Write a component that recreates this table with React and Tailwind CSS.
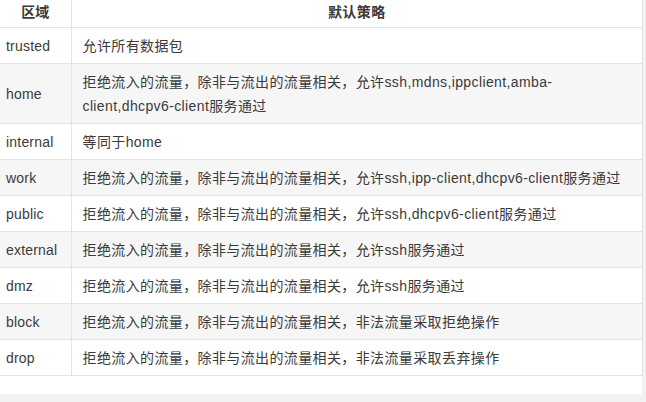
import React from 'react';

const rows = [
    { zone: 'trusted', policy: '允许所有数据包' },
    { zone: 'home', policy: ['拒绝流入的流量，除非与流出的流量相关，允许ssh,mdns,ippclient,amba-', 'client,dhcpv6-client服务通过'] },
    { zone: 'internal', policy: '等同于home' },
    { zone: 'work', policy: '拒绝流入的流量，除非与流出的流量相关，允许ssh,ipp-client,dhcpv6-client服务通过' },
    { zone: 'public', policy: '拒绝流入的流量，除非与流出的流量相关，允许ssh,dhcpv6-client服务通过' },
    { zone: 'external', policy: '拒绝流入的流量，除非与流出的流量相关，允许ssh服务通过' },
    { zone: 'dmz', policy: '拒绝流入的流量，除非与流出的流量相关，允许ssh服务通过' },
    { zone: 'block', policy: '拒绝流入的流量，除非与流出的流量相关，非法流量采取拒绝操作' },
    { zone: 'drop', policy: '拒绝流入的流量，除非与流出的流量相关，非法流量采取丢弃操作' },
];

const App = () => {
    return (
        <div className="w-[646px] h-[402px] bg-[#f2f2f0] overflow-hidden font-['Liberation_Sans','Noto_Sans_CJK_SC',sans-serif] text-[14px] text-[#3a3a3a]">
            <div className="w-[642px] h-[394px] bg-white">
                <table className="w-[643px] border-collapse">
                    <thead>
                        <tr className="border-b border-[#e3e3e3]">
                            <th className="w-[71px] h-[27px] p-0 border-r border-[#e3e3e3] font-bold text-center align-middle leading-[20px] pb-[3px]">区域</th>
                            <th className="h-[27px] p-0 border-r border-[#e3e3e3] font-bold text-center align-middle leading-[20px] pb-[3px] tracking-[0.4px]">默认策略</th>
                        </tr>
                    </thead>
                    <tbody>
                        {rows.map((row, i) => (
                            <tr key={row.zone} className={`border-b border-[#e3e3e3] ${i % 2 === 1 ? 'bg-[#f6f6f6]' : 'bg-white'}`}>
                                <td className="border-r border-[#e3e3e3] pl-[6px] pt-[6px] pb-[5px] leading-[24px] align-middle tracking-[0.2px]">{row.zone}</td>
                                <td className="border-r border-[#e3e3e3] pl-[11px] pt-[6px] pb-[5px] leading-[24px] align-middle tracking-[0.38px]">
                                    {Array.isArray(row.policy) ? row.policy.map((l) => <div key={l}>{l}</div>) : row.policy}
                                </td>
                            </tr>
                        ))}
                    </tbody>
                </table>
            </div>
        </div>
    );
};

export default App;
